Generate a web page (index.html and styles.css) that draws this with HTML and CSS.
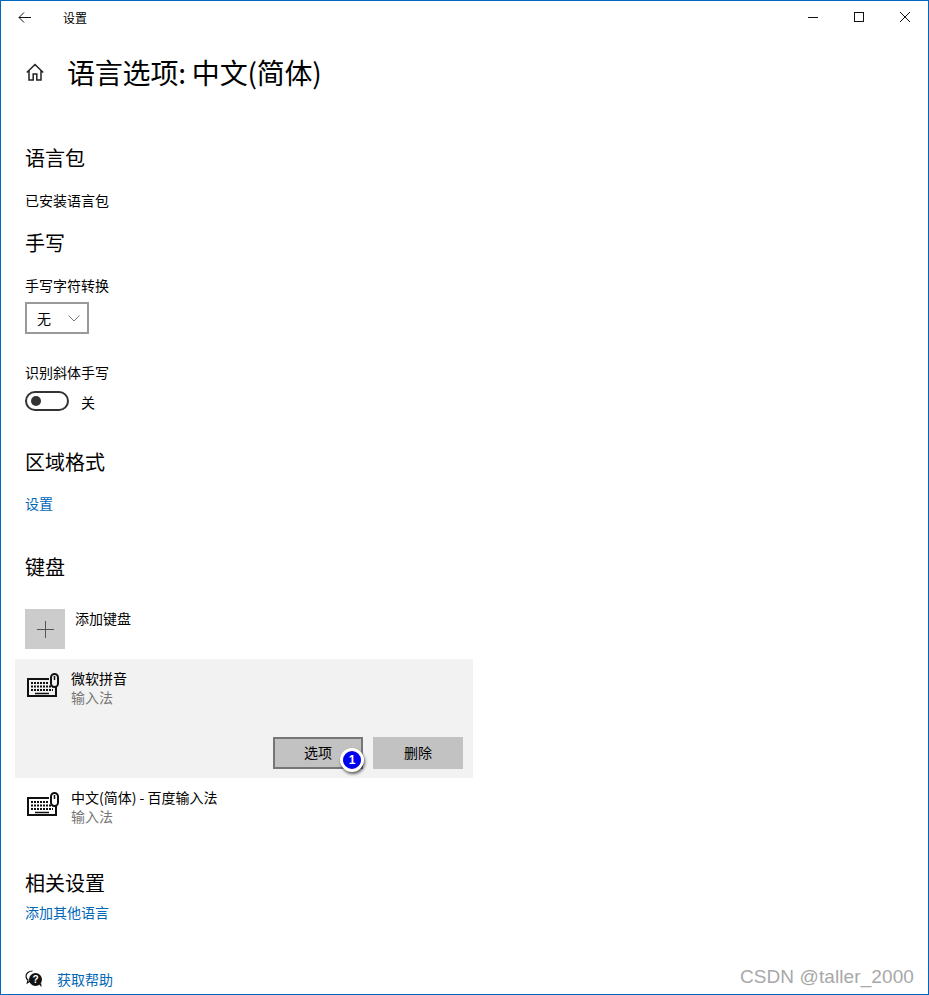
FILE: index.html
```html
<!DOCTYPE html>
<html lang="zh-CN">
<head>
    <meta charset="UTF-8">
    <title>设置</title>
    <link rel="stylesheet" href="styles.css">
</head>
<body>
    <div class="window">
        <div class="titlebar">
            <svg class="back-icon" width="16" height="16" viewBox="0 0 16 16"><path d="M15 8.500H3M8 3.500L3 8.500l5 5" fill="none" stroke="#111" stroke-width="1"/></svg>
            <span class="app-name">设置</span>
            <div class="window-btns">
                <svg width="12" height="12" viewBox="0 0 12 12"><path d="M1 6.500h10" stroke="#111" stroke-width="1"/></svg>
                <svg width="12" height="12" viewBox="0 0 12 12"><rect x="1.500" y="1.500" width="9" height="9" fill="none" stroke="#111"/></svg>
                <svg width="12" height="12" viewBox="0 0 12 12"><path d="M1 1l10 10M11 1L1 11" stroke="#111" stroke-width="1"/></svg>
            </div>
        </div>

        <div class="page-head">
            <svg class="home-icon" width="18" height="18" viewBox="0 0 18 18"><path d="M.8 9.500L9 1.500l8.200 8M3 7.500v9.500h4.200v-6h3.600v6H15V7.500" fill="none" stroke="#222" stroke-width="1.500"/></svg>
            <h1>语言选项: 中文(简体)</h1>
        </div>

        <h2 class="sec-lang">语言包</h2>
        <p class="text installed">已安装语言包</p>

        <h2 class="sec-hand">手写</h2>
        <p class="text hand-label">手写字符转换</p>
        <div class="select">
            <span>无</span>
            <svg width="12" height="7" viewBox="0 0 12 7"><path d="M.5.5L6 6 11.500.5" fill="none" stroke="#777"/></svg>
        </div>
        <p class="text italic-label">识别斜体手写</p>
        <div class="toggle-row">
            <div class="toggle"><span class="knob"></span></div>
            <span class="text toggle-state">关</span>
        </div>

        <h2 class="sec-region">区域格式</h2>
        <a class="link region-link">设置</a>

        <h2 class="sec-keyboard">键盘</h2>
        <div class="add-row">
            <div class="add-tile"><svg width="17" height="17" viewBox="0 0 17 17"><path d="M8.500 0v17M0 8.500h17" stroke="#555" stroke-width="1"/></svg></div>
            <span class="text add-label">添加键盘</span>
        </div>

        <div class="kb-item selected">
            <div class="kb-main">
                <svg class="kb-icon" width="32" height="24" viewBox="0 0 32 24"><use href="#kb"/></svg>
                <div class="kb-text">
                    <div class="text">微软拼音</div>
                    <div class="text sub">输入法</div>
                </div>
            </div>
            <div class="kb-actions">
                <button class="btn focused">选项<span class="badge">1</span></button>
                <button class="btn">删除</button>
            </div>
        </div>
        <div class="kb-item plain">
            <div class="kb-main">
                <svg class="kb-icon" width="32" height="24" viewBox="0 0 32 24"><use href="#kb"/></svg>
                <div class="kb-text">
                    <div class="text">中文(简体) - 百度输入法</div>
                    <div class="text sub">输入法</div>
                </div>
            </div>
        </div>

        <h2 class="sec-related">相关设置</h2>
        <a class="link related-link">添加其他语言</a>

        <div class="help-row">
            <svg width="18" height="18" viewBox="0 0 18 18">
                <path d="M7.500 1C3.900 1 1 3.300 1 6.300c0 1.500.8 2.900 2 3.800L2.300 13l3-2" fill="#fff" stroke="#111" stroke-width="1.200"/>
                <circle cx="10.500" cy="9.500" r="6.500" fill="#111"/>
                <path d="M14 14.500l2.500 2.500-.3-4z" fill="#111"/>
                <text x="10.500" y="13" class="help-q">?</text>
            </svg>
            <a class="link">获取帮助</a>
        </div>

        <div class="watermark">CSDN @taller_2000</div>
    </div>

    <svg class="defs" width="0" height="0">
        <symbol id="kb" viewBox="0 0 32 24">
            <path d="M22 6H1v17h28V14" fill="none" stroke="#111" stroke-width="2"/>
            <path d="M4 10h18M4 13.500h22M4 17h22" stroke="#111" stroke-width="2" stroke-dasharray="2 1"/>
            <path d="M8 20.500h14" stroke="#111" stroke-width="1.500"/>
            <rect x="24" y="1" width="7" height="13" rx="3.500" fill="none" stroke="#111" stroke-width="2"/>
            <path d="M27.500 3v4" stroke="#111" stroke-width="1.500"/>
        </symbol>
    </svg>
</body>
</html>
```

FILE: styles.css
```css
* {
    box-sizing: border-box;
}

html, body {
    margin: 0;
    padding: 0;
}

body {
    font-family: "Noto Sans CJK SC", "Open Sans", sans-serif;
    background-color: #fff;
    color: #000;
}

.window {
    position: relative;
    width: 929px;
    height: 995px;
    border: 1px solid #0067c0;
    overflow: hidden;
    padding-left: 24px;
}

.defs {
    position: absolute;
}

.titlebar {
    display: flex;
    align-items: center;
    height: 32px;
    margin-left: -24px;
    padding-left: 15px;
}

.app-name {
    font-size: 12px;
    margin-left: 31px;
}

.window-btns {
    display: flex;
    gap: 34px;
    margin-left: auto;
    padding-right: 17px;
}

.page-head {
    display: flex;
    align-items: center;
    height: 46px;
    margin-top: 16px;
}

.home-icon {
    margin-right: 23px;
    margin-left: 1px;
}

h1 {
    font-size: 28px;
    font-weight: 400;
    line-height: 46px;
    letter-spacing: -0.2px;
    margin: 0;
}

h2 {
    font-size: 20px;
    font-weight: 400;
    line-height: 28px;
    margin: 0;
}

.text {
    font-size: 14px;
    line-height: 20px;
    margin: 0;
}

.sub {
    color: #767676;
    margin-top: -1px;
}

.link {
    display: block;
    font-size: 14px;
    line-height: 20px;
    color: #0067b8;
}

.sec-lang { margin-top: 49px; }
.installed { margin-top: 18px; }
.sec-hand { margin-top: 19px; }
.hand-label { margin-top: 18px; }

.select {
    display: flex;
    align-items: center;
    justify-content: space-between;
    width: 64px;
    height: 32px;
    margin-top: 7px;
    padding: 0 7px 0 10px;
    border: 2px solid #999;
    font-size: 14px;
}

.italic-label { margin-top: 28px; }

.toggle-row {
    display: flex;
    align-items: flex-start;
    gap: 12px;
    margin-top: 9px;
}

.toggle {
    display: flex;
    align-items: center;
    width: 44px;
    height: 20px;
    padding-left: 4px;
    border: 2px solid #333;
    border-radius: 10px;
}

.toggle-state {
    margin-top: 1px;
}

.knob {
    width: 10px;
    height: 10px;
    border-radius: 50%;
    background-color: #333;
}

.sec-region { margin-top: 36px; }
.region-link { margin-top: 17px; }
.sec-keyboard { margin-top: 40px; }

.add-row {
    display: flex;
    align-items: flex-start;
    gap: 10px;
    margin-top: 28px;
}

.add-label {
    margin-top: -1px;
}

.add-tile {
    display: flex;
    align-items: center;
    justify-content: center;
    width: 40px;
    height: 40px;
    background-color: #ccc;
}

.kb-item {
    width: 458px;
    margin-left: -10px;
    padding: 10px;
}

.selected {
    height: 119px;
    margin-top: 10px;
    background-color: #f2f2f2;
}

.selected .kb-text {
    margin-top: -1px;
}

.plain {
    padding-top: 9px;
    padding-bottom: 11px;
}

.plain .kb-icon {
    margin-top: 5px;
}

.kb-main {
    display: flex;
    gap: 12px;
}

.kb-icon {
    margin-left: 2px;
    margin-top: 4px;
}

.kb-actions {
    display: flex;
    justify-content: flex-end;
    gap: 10px;
    margin-top: 30px;
}

.btn {
    position: relative;
    width: 90px;
    height: 32px;
    padding: 0 0 2px;
    border: 2px solid #c2c2c2;
    background-color: #c2c2c2;
    color: #000;
    font-family: inherit;
    font-size: 14px;
}

.focused {
    border-color: #767676;
}

.badge {
    position: absolute;
    left: 65px;
    top: 9px;
    width: 24px;
    height: 24px;
    border: 3px solid #fff;
    border-radius: 50%;
    background-color: #0000f0;
    box-shadow: 1px 2px 3px rgba(0, 0, 0, 0.6);
    color: #fff;
    font-family: "Liberation Sans", sans-serif;
    font-size: 12px;
    font-weight: 700;
    line-height: 18px;
    text-align: center;
}

.sec-related { margin-top: 32px; }
.related-link { margin-top: 5px; }

.help-row {
    position: absolute;
    left: 24px;
    top: 968px;
    display: flex;
    align-items: center;
    gap: 14px;
}

.help-q {
    fill: #fff;
    font-family: "Liberation Sans", sans-serif;
    font-size: 10px;
    font-weight: 700;
    text-anchor: middle;
}

.watermark {
    position: absolute;
    right: 14px;
    bottom: 6px;
    color: #a8a8a8;
    font-family: "Liberation Sans", sans-serif;
    font-size: 19px;
    letter-spacing: 0.1px;
}
```
